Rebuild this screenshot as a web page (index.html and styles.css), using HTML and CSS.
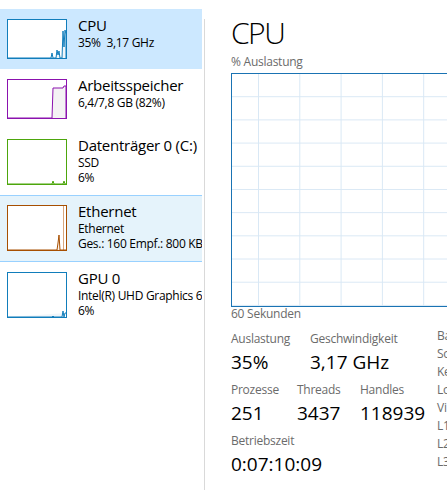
FILE: index.html
```html
<!DOCTYPE html>
<html lang="de">
<head>
<meta charset="utf-8">
<title>Task-Manager – Leistung</title>
<link rel="stylesheet" href="styles.css">
</head>
<body>
<div class="app">
  <nav class="sidebar">
    <div class="item selected">
      <div class="thumb cpu">
        <svg viewBox="0 0 58 38" preserveAspectRatio="none"><polyline points="0,38 43,38 44,33 45,38 48,38 49,30 50,35 51,31 52,38 54,38 55,11 56,27 57,10 58,14 58,38" class="fill-cpu"/></svg>
      </div>
      <div class="info">
        <div class="name">CPU</div>
        <div class="sub">35%&nbsp;&nbsp;3,17 GHz</div>
      </div>
    </div>
    <div class="item">
      <div class="thumb mem">
        <svg viewBox="0 0 58 38" preserveAspectRatio="none"><polyline points="0,38 44,38 45,8 55,8 56,6 58,6 58,38" class="fill-mem"/></svg>
      </div>
      <div class="info">
        <div class="name">Arbeitsspeicher</div>
        <div class="sub">6,4/7,8 GB (82%)</div>
      </div>
    </div>
    <div class="item">
      <div class="thumb disk tall">
        <svg viewBox="0 0 58 44" preserveAspectRatio="none"><polyline points="0,44 44,44 45,41 46,44 55,44 56,41 57,44 58,44" class="fill-disk"/></svg>
      </div>
      <div class="info">
        <div class="name">Datenträger 0 (C:)</div>
        <div class="sub">SSD</div>
        <div class="sub">6%</div>
      </div>
    </div>
    <div class="item hover">
      <div class="thumb eth tall">
        <svg viewBox="0 0 58 44" preserveAspectRatio="none"><line x1="55.5" y1="0" x2="55.5" y2="44" class="eth-mark"/><polyline points="0,44 49,44 50,37 51,29 52,44 58,44" class="fill-eth"/></svg>
      </div>
      <div class="info">
        <div class="name">Ethernet</div>
        <div class="sub">Ethernet</div>
        <div class="sub">Ges.: 160 Empf.: 800 KBit/s</div>
      </div>
    </div>
    <div class="item">
      <div class="thumb gpu tall">
        <svg viewBox="0 0 58 44" preserveAspectRatio="none"><polyline points="0,44 44,44 45,43 46,44 54,44 55,38 56,44 57,40 58,40" class="fill-gpu"/></svg>
      </div>
      <div class="info">
        <div class="name">GPU 0</div>
        <div class="sub">Intel(R) UHD Graphics 620</div>
        <div class="sub">6%</div>
      </div>
    </div>
  </nav>
  <div class="divider"></div>
  <main class="detail">
    <h1 class="title">CPU</h1>
    <div class="axis-label">% Auslastung</div>
    <div class="graph"></div>
    <div class="axis-label time">60 Sekunden</div>
    <div class="stats">
      <div class="dyn">
        <div class="row">
          <div class="stat c1"><div class="label">Auslastung</div><div class="value">35%</div></div>
          <div class="stat"><div class="label">Geschwindigkeit</div><div class="value">3,17 GHz</div></div>
        </div>
        <div class="row">
          <div class="stat p1"><div class="label">Prozesse</div><div class="value">251</div></div>
          <div class="stat p2"><div class="label">Threads</div><div class="value">3437</div></div>
          <div class="stat"><div class="label">Handles</div><div class="value">118939</div></div>
        </div>
        <div class="row">
          <div class="stat"><div class="label">Betriebszeit</div><div class="value">0:07:10:09</div></div>
        </div>
      </div>
      <div class="specs">
        <div>Basisgeschwindigkeit:</div>
        <div>Sockets:</div>
        <div>Kerne:</div>
        <div>Logische Prozessoren:</div>
        <div>Virtualisierung:</div>
        <div>L1-Cache:</div>
        <div>L2-Cache:</div>
        <div>L3-Cache:</div>
      </div>
    </div>
  </main>
</div>
</body>
</html>
```

FILE: styles.css
```css
html, body {
  margin: 0;
  padding: 0;
  background: #ffffff;
}

body {
  font-family: "Segoe UI", "Open Sans", "Noto Sans", sans-serif;
  color: #000000;
  overflow: hidden;
}

.app {
  display: flex;
  height: 492px;
}

/* ---------- left list ---------- */
.sidebar {
  width: 202px;
  flex: none;
  padding-top: 9px;
  overflow: hidden;
}

.item {
  display: flex;
  align-items: flex-start;
  padding: 10px 0 10px 7px;
  white-space: nowrap;
}

.item.selected {
  background: #cce8ff;
}

.item.hover {
  background: #e5f3fb;
  border-top: 1px solid #99d1ff;
  border-bottom: 1px solid #99d1ff;
  padding: 9px 0 10px 7px;
}

.thumb {
  width: 60px;
  height: 40px;
  box-sizing: border-box;
  border: 1px solid;
  flex: none;
  background: #ffffff;
}

.thumb.tall {
  height: 46px;
}

.thumb svg {
  display: block;
  width: 58px;
  height: 100%;
}

.thumb.cpu, .thumb.gpu { border-color: #117dbb; }
.thumb.mem { border-color: #8b12ae; }
.thumb.disk { border-color: #4da60c; }
.thumb.eth { border-color: #a74f01; }

.fill-cpu, .fill-gpu {
  fill: #f1f6fa;
  stroke: #117dbb;
  stroke-width: 1;
}

.fill-mem {
  fill: #f4f2f4;
  stroke: #8b12ae;
  stroke-width: 1;
}

.fill-disk {
  fill: #eff7e8;
  stroke: #4da60c;
  stroke-width: 1;
}

.fill-eth {
  fill: #fcf3eb;
  stroke: #a74f01;
  stroke-width: 1;
}

.eth-mark {
  stroke: #d8a77e;
  stroke-width: 1;
}

.info {
  margin-left: 11px;
  margin-top: -4px;
}

.name {
  font-size: 15px;
  line-height: 20px;
  letter-spacing: -0.25px;
}

.sub {
  font-size: 12px;
  line-height: 15px;
  letter-spacing: -0.3px;
}

.divider {
  width: 1px;
  flex: none;
  margin: 19px 0 2px 2px;
  background: #d9d9d9;
}

/* ---------- right detail ---------- */
.detail {
  margin-left: 26px;
  width: 260px;
  flex: none;
  white-space: nowrap;
}

.title {
  font-size: 30px;
  font-weight: 300;
  line-height: 40px;
  letter-spacing: -1.5px;
  margin: 13px 0 0;
}

.axis-label {
  font-size: 12px;
  line-height: 16px;
  letter-spacing: -0.25px;
  color: #6b6b6b;
  margin-top: 1px;
}

.graph {
  margin-top: 3px;
  height: 234px;
  box-sizing: border-box;
  border: 1px solid #1a73b3;
  background-color: #ffffff;
  background-image:
    linear-gradient(to right, #d9e8f5 1px, transparent 1px),
    linear-gradient(to bottom, transparent calc(100% - 1px), #d9e8f5 1px);
  background-size: 41.3px 100%, 100% 23.2px;
  background-position: 26px 0, 0 0;
}

.axis-label.time {
  line-height: 14px;
  margin-top: 0;
}

.stats {
  display: flex;
  margin-top: 9px;
}

.dyn {
  width: 206px;
  flex: none;
  display: flex;
  flex-direction: column;
  gap: 5px;
}

.row {
  display: flex;
}

.stat.c1 { width: 79px; }
.stat.p1 { width: 66px; }
.stat.p2 { width: 63px; }

.label {
  font-size: 12px;
  line-height: 18px;
  letter-spacing: -0.25px;
  color: #6b6b6b;
}

.value {
  font-size: 19px;
  line-height: 28px;
}

.specs {
  font-size: 12px;
  line-height: 18px;
  letter-spacing: -0.25px;
  color: #6b6b6b;
  margin-top: -3px;
}
```
